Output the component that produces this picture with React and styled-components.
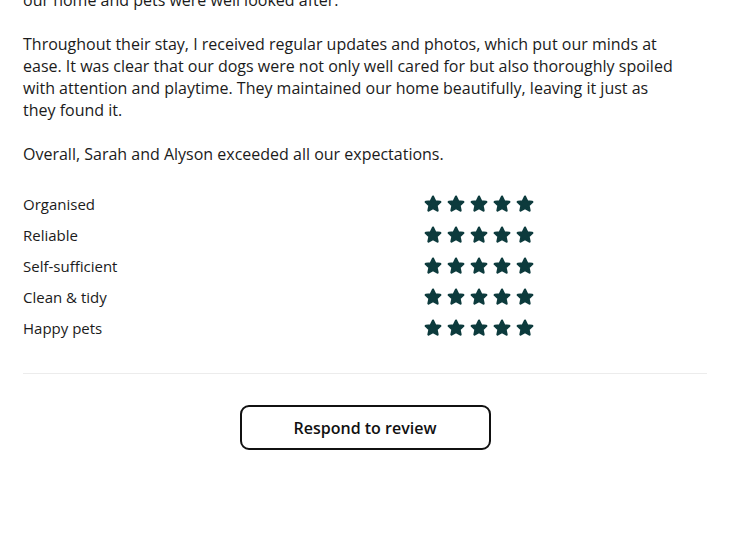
import React from "react";
import styled, { createGlobalStyle } from "styled-components";

const GlobalStyle = createGlobalStyle`
  html, body { margin: 0; padding: 0; background: #ffffff; }
  body { font-family: "Open Sans", "Noto Sans", sans-serif; color: #1b1b1b; }
`;

const Page = styled.main`
  width: 730px;
  height: 560px;
  overflow: hidden;
  box-sizing: border-box;
  padding: 0 23px;
`;

const Review = styled.section`
  display: flex;
  flex-direction: column;
  gap: 22px;
  margin-top: -11px;
`;

const Paragraph = styled.p`
  margin: 0;
  max-width: 656px;
  font-size: 16px;
  line-height: 22px;
  color: #1b1b1b;
`;

const Ratings = styled.div`
  margin-top: 23px;
  display: flex;
  flex-direction: column;
`;

const RatingRow = styled.div`
  display: grid;
  grid-template-columns: 400px auto;
  align-items: center;
  height: 31px;
`;

const RatingLabel = styled.span`
  font-size: 15px;
  line-height: 20px;
  color: #1b1b1b;
`;

const Stars = styled.div`
  display: flex;
  gap: 3px;
  align-items: center;
`;

const Divider = styled.hr`
  margin: 30px 0 0;
  border: 0;
  border-top: 1px solid #ececec;
`;

const Actions = styled.div`
  display: flex;
  justify-content: center;
  padding-top: 31px;
`;

const RespondButton = styled.button`
  width: 251px;
  height: 45px;
  box-sizing: border-box;
  border: 2px solid #111111;
  border-radius: 9px;
  background: #ffffff;
  font-family: "Open Sans", "Noto Sans", sans-serif;
  font-size: 16px;
  font-weight: 600;
  color: #111111;
  cursor: pointer;
`;

const Star = () => (
  <svg width="20" height="20" viewBox="0 0 24 24" aria-hidden="true">
    <path
      d="M12 3.2l2.6 5.6 6.1.75-4.5 4.2 1.2 6.05L12 16.75l-5.4 3.05 1.2-6.05-4.5-4.2 6.1-.75z"
      fill="#0d3b3d"
      stroke="#0d3b3d"
      strokeWidth="2.8"
      strokeLinejoin="round"
    />
  </svg>
);

const ratings = ["Organised", "Reliable", "Self-sufficient", "Clean & tidy", "Happy pets"];

export default function App() {
  return (
    <Page>
      <GlobalStyle />
      <Review>
        <Paragraph>our home and pets were well looked after.</Paragraph>
        <Paragraph>
          Throughout their stay, I received regular updates and photos, which put our minds at
          ease. It was clear that our dogs were not only well cared for but also thoroughly spoiled
          with attention and playtime. They maintained our home beautifully, leaving it just as
          they found it.
        </Paragraph>
        <Paragraph>Overall, Sarah and Alyson exceeded all our expectations.</Paragraph>
      </Review>
      <Ratings>
        {ratings.map((r) => (
          <RatingRow key={r}>
            <RatingLabel>{r}</RatingLabel>
            <Stars>
              {[0, 1, 2, 3, 4].map((i) => (
                <Star key={i} />
              ))}
            </Stars>
          </RatingRow>
        ))}
      </Ratings>
      <Divider />
      <Actions>
        <RespondButton type="button">Respond to review</RespondButton>
      </Actions>
    </Page>
  );
}
